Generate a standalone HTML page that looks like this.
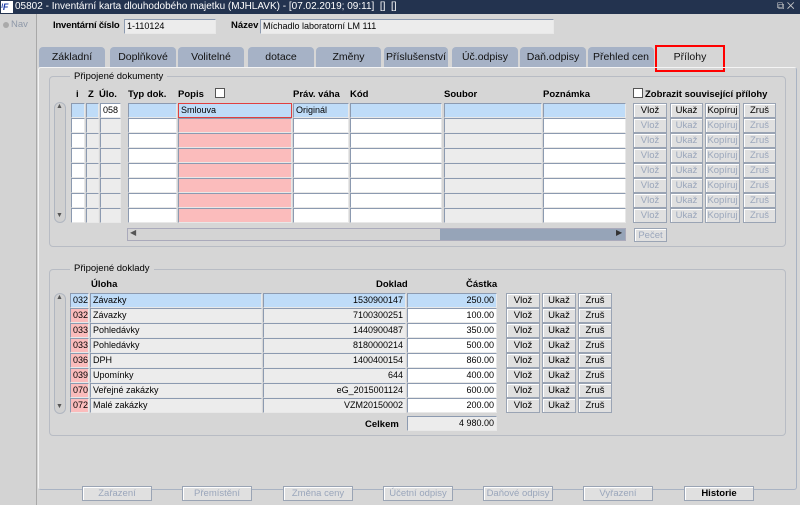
<!DOCTYPE html>
<html><head><meta charset="utf-8">
<style>
*{box-sizing:border-box;margin:0;padding:0}
body{width:800px;height:505px;overflow:hidden;background:#d6d6d6;font-family:"Liberation Sans",sans-serif;font-size:10px;color:#000;position:relative}
div,span{position:absolute}
.t{white-space:nowrap}
.b{font-weight:bold;font-size:9.5px}
.f{height:15px;border:1px solid #8c9ab0;border-right-color:#e8e8e8;border-bottom-color:#e8e8e8;background:#fff;padding:1px 2px;font-size:9px;line-height:11px;white-space:nowrap;overflow:hidden}
.g{background:#ececec}.w{background:#fff}.bl{background:#bfdcf8}.pk{background:#fbbcbc}
.btn{height:15px;border:1px solid #9aa4b4;background:#e0e0e0;text-align:center;font-size:9.5px;line-height:13px;color:#000;white-space:nowrap;box-shadow:inset 1px 1px 0 #fff}
.dis{color:#9aa6bb}
.tab{top:47px;height:20px;background:#a6b2c6;border-radius:4px 4px 0 0;text-align:center;font-size:10.5px;line-height:20px;color:#111}
.grp{border:1px solid #b8bcc4;border-radius:4px}
</style></head><body>
<div style="left:0;top:0;width:800px;height:14px;background:#23334f"></div>
<div style="left:1px;top:1px;width:12px;height:12px;background:#fff;color:#1a3ca8;font-size:9px;font-weight:bold;font-style:italic;line-height:12px">ᴵF</div>
<div class="t" style="left:15px;top:0;color:#fff;font-size:10px;line-height:14px">05802 - Inventární karta dlouhodobého majetku (MJHLAVK) - [07.02.2019; 09:11] &nbsp;[] &nbsp;[]</div>
<div class="t" style="left:777px;top:0;color:#ccc;font-size:10px;line-height:14px">⧉ ✕</div>
<div style="left:0;top:14px;width:37px;height:491px;background:#d3d3d3;border-right:1px solid #a8a8a8"></div>
<div style="left:3px;top:22px;width:6px;height:6px;border-radius:50%;background:#aaa"></div>
<div class="t" style="left:11px;top:19px;color:#8e98a8;font-size:9.5px">Nav</div>

<div class="t b" style="left:53px;top:20px;font-size:9.5px;letter-spacing:-0.2px">Inventární číslo</div>
<div class="f g" style="left:124px;top:19px;width:92px">1-110124</div>
<div class="t b" style="left:231px;top:20px;font-size:9.5px">Název</div>
<div class="f g" style="left:260px;top:19px;width:294px">Míchadlo laboratorní LM 111</div>

<div class="tab" style="left:39px;width:66px">Základní</div>
<div class="tab" style="left:110px;width:66px">Doplňkové</div>
<div class="tab" style="left:178px;width:66px">Volitelné</div>
<div class="tab" style="left:248px;width:66px">dotace</div>
<div class="tab" style="left:316px;width:65px">Změny</div>
<div class="tab" style="left:384px;width:64px">Příslušenství</div>
<div class="tab" style="left:452px;width:66px">Úč.odpisy</div>
<div class="tab" style="left:520px;width:66px">Daň.odpisy</div>
<div class="tab" style="left:588px;width:66px">Přehled cen</div>
<div class="tab" style="left:657px;top:47px;width:66px;background:#d6d6d6">Přílohy</div>
<div style="left:655px;top:45px;width:70px;height:27px;border:2px solid #f00"></div>

<div style="left:38px;top:67px;width:759px;height:423px;border:1px solid #a9b3c3;border-top-color:#f4f4f4;border-left-color:#f4f4f4;border-radius:3px"></div>

<div class="grp" style="left:49px;top:76px;width:737px;height:171px"></div>
<div class="t" style="left:70px;top:71px;background:#d6d6d6;padding:0 4px;font-size:9.5px">Připojené dokumenty</div>
<div class="t b" style="left:76px;top:89px">i</div>
<div class="t b" style="left:88px;top:89px">Z</div>
<div class="t b" style="left:99px;top:89px">Úlo.</div>
<div class="t b" style="left:128px;top:89px">Typ dok.</div>
<div class="t b" style="left:178px;top:89px">Popis</div>
<div style="left:215px;top:88px;width:10px;height:10px;border:1px solid #555;background:#fff"></div>
<div class="t b" style="left:293px;top:89px">Práv. váha</div>
<div class="t b" style="left:350px;top:89px">Kód</div>
<div class="t b" style="left:444px;top:89px">Soubor</div>
<div class="t b" style="left:543px;top:89px">Poznámka</div>
<div style="left:633px;top:88px;width:10px;height:10px;border:1px solid #555;background:#fff"></div>
<div class="t b" style="left:645px;top:89px">Zobrazit související přílohy</div>

<div style="left:54px;top:102px;width:12px;height:121px;border:1px solid #b0b6c0;border-radius:6px;background:#d0d0d0"></div>
<div class="t" style="left:56px;top:103px;font-size:7px;color:#555">▲</div>
<div class="t" style="left:56px;top:212px;font-size:7px;color:#555">▼</div>

<div class="f bl" style="left:71px;top:103px;width:14px"></div><div class="f bl" style="left:86px;top:103px;width:13px"></div><div class="f w" style="left:100px;top:103px;width:21px">058</div><div class="f bl" style="left:128px;top:103px;width:49px"></div><div class="f bl" style="left:178px;top:103px;width:114px;border:1px solid #e04040">Smlouva</div><div class="f bl" style="left:293px;top:103px;width:56px">Originál</div><div class="f bl" style="left:350px;top:103px;width:92px"></div><div class="f bl" style="left:444px;top:103px;width:98px"></div><div class="f bl" style="left:543px;top:103px;width:83px"></div>
<div class="btn" style="left:633px;top:103px;width:34px">Vlož</div><div class="btn" style="left:670px;top:103px;width:33px">Ukaž</div><div class="btn" style="left:705px;top:103px;width:35px">Kopíruj</div><div class="btn" style="left:743px;top:103px;width:33px">Zruš</div>

<div style="left:0;top:118px"><div class="f w" style="left:71px;width:14px"></div><div class="f g" style="left:86px;width:13px"></div><div class="f g" style="left:100px;width:21px"></div><div class="f w" style="left:128px;width:49px"></div><div class="f pk" style="left:178px;width:114px"></div><div class="f w" style="left:293px;width:56px"></div><div class="f w" style="left:350px;width:92px"></div><div class="f g" style="left:444px;width:98px"></div><div class="f w" style="left:543px;width:83px"></div><div class="btn dis" style="left:633px;width:34px">Vlož</div><div class="btn dis" style="left:670px;width:33px">Ukaž</div><div class="btn dis" style="left:705px;width:35px">Kopíruj</div><div class="btn dis" style="left:743px;width:33px">Zruš</div></div>
<div style="left:0;top:133px"><div class="f w" style="left:71px;width:14px"></div><div class="f g" style="left:86px;width:13px"></div><div class="f g" style="left:100px;width:21px"></div><div class="f w" style="left:128px;width:49px"></div><div class="f pk" style="left:178px;width:114px"></div><div class="f w" style="left:293px;width:56px"></div><div class="f w" style="left:350px;width:92px"></div><div class="f g" style="left:444px;width:98px"></div><div class="f w" style="left:543px;width:83px"></div><div class="btn dis" style="left:633px;width:34px">Vlož</div><div class="btn dis" style="left:670px;width:33px">Ukaž</div><div class="btn dis" style="left:705px;width:35px">Kopíruj</div><div class="btn dis" style="left:743px;width:33px">Zruš</div></div>
<div style="left:0;top:148px"><div class="f w" style="left:71px;width:14px"></div><div class="f g" style="left:86px;width:13px"></div><div class="f g" style="left:100px;width:21px"></div><div class="f w" style="left:128px;width:49px"></div><div class="f pk" style="left:178px;width:114px"></div><div class="f w" style="left:293px;width:56px"></div><div class="f w" style="left:350px;width:92px"></div><div class="f g" style="left:444px;width:98px"></div><div class="f w" style="left:543px;width:83px"></div><div class="btn dis" style="left:633px;width:34px">Vlož</div><div class="btn dis" style="left:670px;width:33px">Ukaž</div><div class="btn dis" style="left:705px;width:35px">Kopíruj</div><div class="btn dis" style="left:743px;width:33px">Zruš</div></div>
<div style="left:0;top:163px"><div class="f w" style="left:71px;width:14px"></div><div class="f g" style="left:86px;width:13px"></div><div class="f g" style="left:100px;width:21px"></div><div class="f w" style="left:128px;width:49px"></div><div class="f pk" style="left:178px;width:114px"></div><div class="f w" style="left:293px;width:56px"></div><div class="f w" style="left:350px;width:92px"></div><div class="f g" style="left:444px;width:98px"></div><div class="f w" style="left:543px;width:83px"></div><div class="btn dis" style="left:633px;width:34px">Vlož</div><div class="btn dis" style="left:670px;width:33px">Ukaž</div><div class="btn dis" style="left:705px;width:35px">Kopíruj</div><div class="btn dis" style="left:743px;width:33px">Zruš</div></div>
<div style="left:0;top:178px"><div class="f w" style="left:71px;width:14px"></div><div class="f g" style="left:86px;width:13px"></div><div class="f g" style="left:100px;width:21px"></div><div class="f w" style="left:128px;width:49px"></div><div class="f pk" style="left:178px;width:114px"></div><div class="f w" style="left:293px;width:56px"></div><div class="f w" style="left:350px;width:92px"></div><div class="f g" style="left:444px;width:98px"></div><div class="f w" style="left:543px;width:83px"></div><div class="btn dis" style="left:633px;width:34px">Vlož</div><div class="btn dis" style="left:670px;width:33px">Ukaž</div><div class="btn dis" style="left:705px;width:35px">Kopíruj</div><div class="btn dis" style="left:743px;width:33px">Zruš</div></div>
<div style="left:0;top:193px"><div class="f w" style="left:71px;width:14px"></div><div class="f g" style="left:86px;width:13px"></div><div class="f g" style="left:100px;width:21px"></div><div class="f w" style="left:128px;width:49px"></div><div class="f pk" style="left:178px;width:114px"></div><div class="f w" style="left:293px;width:56px"></div><div class="f w" style="left:350px;width:92px"></div><div class="f g" style="left:444px;width:98px"></div><div class="f w" style="left:543px;width:83px"></div><div class="btn dis" style="left:633px;width:34px">Vlož</div><div class="btn dis" style="left:670px;width:33px">Ukaž</div><div class="btn dis" style="left:705px;width:35px">Kopíruj</div><div class="btn dis" style="left:743px;width:33px">Zruš</div></div>
<div style="left:0;top:208px"><div class="f w" style="left:71px;width:14px"></div><div class="f g" style="left:86px;width:13px"></div><div class="f g" style="left:100px;width:21px"></div><div class="f w" style="left:128px;width:49px"></div><div class="f pk" style="left:178px;width:114px"></div><div class="f w" style="left:293px;width:56px"></div><div class="f w" style="left:350px;width:92px"></div><div class="f g" style="left:444px;width:98px"></div><div class="f w" style="left:543px;width:83px"></div><div class="btn dis" style="left:633px;width:34px">Vlož</div><div class="btn dis" style="left:670px;width:33px">Ukaž</div><div class="btn dis" style="left:705px;width:35px">Kopíruj</div><div class="btn dis" style="left:743px;width:33px">Zruš</div></div>

<div style="left:127px;top:228px;width:499px;height:13px;background:#96a4b8;border:1px solid #aab"></div>
<div style="left:128px;top:229px;width:312px;height:11px;background:#d4d4d4"></div>
<div class="t" style="left:130px;top:228px;font-size:8px;color:#555">◀</div>
<div class="t" style="left:616px;top:228px;font-size:8px;color:#333">▶</div>
<div class="btn dis" style="left:634px;top:228px;width:33px;height:14px">Pečet</div>

<div class="grp" style="left:49px;top:269px;width:737px;height:167px"></div>
<div class="t" style="left:70px;top:263px;background:#d6d6d6;padding:0 4px;font-size:9.5px">Připojené doklady</div>
<div class="t b" style="left:91px;top:279px">Úloha</div>
<div class="t b" style="left:376px;top:279px">Doklad</div>
<div class="t b" style="left:466px;top:279px">Částka</div>
<div style="left:54px;top:293px;width:12px;height:121px;border:1px solid #b0b6c0;border-radius:6px;background:#d0d0d0"></div>
<div class="t" style="left:56px;top:294px;font-size:7px;color:#555">▲</div>
<div class="t" style="left:56px;top:403px;font-size:7px;color:#555">▼</div>

<div style="left:0;top:293px"><div class="f bl" style="left:70px;width:19px">032</div><div class="f bl" style="left:90px;width:172px">Závazky</div><div class="f bl" style="left:263px;width:143px;text-align:right">1530900147</div><div class="f bl" style="left:407px;width:90px;text-align:right">250.00</div><div class="btn bl" style="left:506px;width:34px">Vlož</div><div class="btn bl" style="left:542px;width:34px">Ukaž</div><div class="btn bl" style="left:578px;width:34px">Zruš</div></div>
<div style="left:0;top:308px"><div class="f pk" style="left:70px;width:19px">032</div><div class="f g" style="left:90px;width:172px">Závazky</div><div class="f g" style="left:263px;width:143px;text-align:right">7100300251</div><div class="f w" style="left:407px;width:90px;text-align:right">100.00</div><div class="btn" style="left:506px;width:34px">Vlož</div><div class="btn" style="left:542px;width:34px">Ukaž</div><div class="btn" style="left:578px;width:34px">Zruš</div></div>
<div style="left:0;top:323px"><div class="f pk" style="left:70px;width:19px">033</div><div class="f g" style="left:90px;width:172px">Pohledávky</div><div class="f g" style="left:263px;width:143px;text-align:right">1440900487</div><div class="f w" style="left:407px;width:90px;text-align:right">350.00</div><div class="btn" style="left:506px;width:34px">Vlož</div><div class="btn" style="left:542px;width:34px">Ukaž</div><div class="btn" style="left:578px;width:34px">Zruš</div></div>
<div style="left:0;top:338px"><div class="f pk" style="left:70px;width:19px">033</div><div class="f g" style="left:90px;width:172px">Pohledávky</div><div class="f g" style="left:263px;width:143px;text-align:right">8180000214</div><div class="f w" style="left:407px;width:90px;text-align:right">500.00</div><div class="btn" style="left:506px;width:34px">Vlož</div><div class="btn" style="left:542px;width:34px">Ukaž</div><div class="btn" style="left:578px;width:34px">Zruš</div></div>
<div style="left:0;top:353px"><div class="f pk" style="left:70px;width:19px">036</div><div class="f g" style="left:90px;width:172px">DPH</div><div class="f g" style="left:263px;width:143px;text-align:right">1400400154</div><div class="f w" style="left:407px;width:90px;text-align:right">860.00</div><div class="btn" style="left:506px;width:34px">Vlož</div><div class="btn" style="left:542px;width:34px">Ukaž</div><div class="btn" style="left:578px;width:34px">Zruš</div></div>
<div style="left:0;top:368px"><div class="f pk" style="left:70px;width:19px">039</div><div class="f g" style="left:90px;width:172px">Upomínky</div><div class="f g" style="left:263px;width:143px;text-align:right">644</div><div class="f w" style="left:407px;width:90px;text-align:right">400.00</div><div class="btn" style="left:506px;width:34px">Vlož</div><div class="btn" style="left:542px;width:34px">Ukaž</div><div class="btn" style="left:578px;width:34px">Zruš</div></div>
<div style="left:0;top:383px"><div class="f pk" style="left:70px;width:19px">070</div><div class="f g" style="left:90px;width:172px">Veřejné zakázky</div><div class="f g" style="left:263px;width:143px;text-align:right">eG_2015001124</div><div class="f w" style="left:407px;width:90px;text-align:right">600.00</div><div class="btn" style="left:506px;width:34px">Vlož</div><div class="btn" style="left:542px;width:34px">Ukaž</div><div class="btn" style="left:578px;width:34px">Zruš</div></div>
<div style="left:0;top:398px"><div class="f pk" style="left:70px;width:19px">072</div><div class="f g" style="left:90px;width:172px">Malé zakázky</div><div class="f g" style="left:263px;width:143px;text-align:right">VZM20150002</div><div class="f w" style="left:407px;width:90px;text-align:right">200.00</div><div class="btn" style="left:506px;width:34px">Vlož</div><div class="btn" style="left:542px;width:34px">Ukaž</div><div class="btn" style="left:578px;width:34px">Zruš</div></div>
<div class="t b" style="left:365px;top:419px">Celkem</div>
<div class="f g" style="left:407px;top:416px;width:90px;text-align:right">4 980.00</div>

<div class="btn dis" style="left:82px;top:486px;width:70px">Zařazení</div>
<div class="btn dis" style="left:182px;top:486px;width:70px">Přemístění</div>
<div class="btn dis" style="left:283px;top:486px;width:70px">Změna ceny</div>
<div class="btn dis" style="left:383px;top:486px;width:70px">Účetní odpisy</div>
<div class="btn dis" style="left:483px;top:486px;width:70px">Daňové odpisy</div>
<div class="btn dis" style="left:583px;top:486px;width:70px">Vyřazení</div>
<div class="btn b" style="left:684px;top:486px;width:70px">Historie</div>
</body></html>
